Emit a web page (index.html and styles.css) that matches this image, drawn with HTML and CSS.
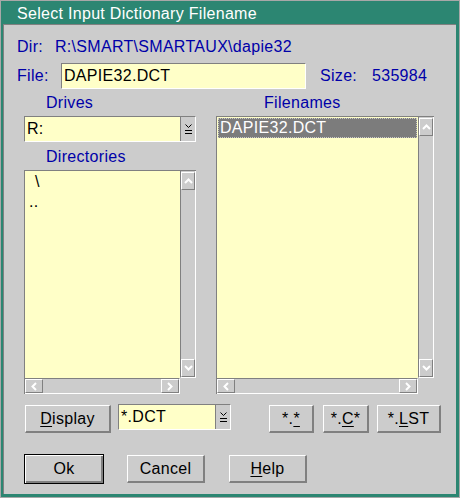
FILE: index.html
```html
<!DOCTYPE html>
<html>
<head>
<meta charset="utf-8">
<link rel="stylesheet" href="styles.css">
</head>
<body>
<div class="window">
  <div class="titlebar">Select Input Dictionary Filename</div>
  <div class="client">
    <div class="row dir-row">
      <span class="lbl dir-lbl">Dir:</span>
      <span class="lbl">R:\SMART\SMARTAUX\dapie32</span>
    </div>
    <div class="row file-row">
      <span class="lbl file-lbl">File:</span>
      <div class="entry">DAPIE32.DCT</div>
      <span class="lbl size-lbl">Size:</span>
      <span class="lbl">535984</span>
    </div>
    <div class="columns">
      <div class="col col-left">
        <div class="group-label">Drives</div>
        <div class="combo drives">
          <div class="combo-text">R:</div>
          <div class="combo-btn"><svg width="7" height="10" viewBox="0 0 7 10"><polyline points="0.5,0.5 3.5,3.5 6.5,0.5" fill="none" stroke="#000" stroke-width="1"/><line x1="0" y1="6.5" x2="7" y2="6.5" stroke="#000"/><line x1="0" y1="9.5" x2="7" y2="9.5" stroke="#000"/></svg></div>
        </div>
        <div class="group-label dirs-label">Directories</div>
        <div class="listbox dirs">
          <div class="list-area">
            <div class="item"><span class="indent">\</span></div>
            <div class="item">..</div>
          </div>
          <div class="vscroll">
            <div class="sbtn vbtn"><svg width="9" height="6" viewBox="0 0 9 6"><polyline points="1,5 4.5,1.5 8,5" fill="none" stroke="#fff" stroke-width="2"/></svg></div>
            <div class="sbtn vbtn"><svg width="9" height="6" viewBox="0 0 9 6"><polyline points="1,1 4.5,4.5 8,1" fill="none" stroke="#fff" stroke-width="2"/></svg></div>
          </div>
          <div class="hscroll">
            <div class="sbtn hbtn"><svg width="6" height="9" viewBox="0 0 6 9"><polyline points="5,1 1.5,4.5 5,8" fill="none" stroke="#fff" stroke-width="2"/></svg></div>
            <div class="sbtn hbtn"><svg width="6" height="9" viewBox="0 0 6 9"><polyline points="1,1 4.5,4.5 1,8" fill="none" stroke="#fff" stroke-width="2"/></svg></div>
          </div>
          <div class="corner"></div>
        </div>
      </div>
      <div class="col col-right">
        <div class="group-label files-label">Filenames</div>
        <div class="listbox files">
          <div class="list-area">
            <div class="item selected">DAPIE32.DCT</div>
          </div>
          <div class="vscroll">
            <div class="sbtn vbtn"><svg width="9" height="6" viewBox="0 0 9 6"><polyline points="1,5 4.5,1.5 8,5" fill="none" stroke="#fff" stroke-width="2"/></svg></div>
            <div class="sbtn vbtn"><svg width="9" height="6" viewBox="0 0 9 6"><polyline points="1,1 4.5,4.5 8,1" fill="none" stroke="#fff" stroke-width="2"/></svg></div>
          </div>
          <div class="hscroll">
            <div class="sbtn hbtn"><svg width="6" height="9" viewBox="0 0 6 9"><polyline points="5,1 1.5,4.5 5,8" fill="none" stroke="#fff" stroke-width="2"/></svg></div>
            <div class="sbtn hbtn"><svg width="6" height="9" viewBox="0 0 6 9"><polyline points="1,1 4.5,4.5 1,8" fill="none" stroke="#fff" stroke-width="2"/></svg></div>
          </div>
          <div class="corner"></div>
        </div>
      </div>
    </div>
    <div class="row tools">
      <div class="btn btn-display"><u>D</u>isplay</div>
      <div class="combo filter">
        <div class="combo-text">*.DCT</div>
        <div class="combo-btn"><svg width="7" height="10" viewBox="0 0 7 10"><polyline points="0.5,0.5 3.5,3.5 6.5,0.5" fill="none" stroke="#000" stroke-width="1"/><line x1="0" y1="6.5" x2="7" y2="6.5" stroke="#000"/><line x1="0" y1="9.5" x2="7" y2="9.5" stroke="#000"/></svg></div>
      </div>
      <div class="btn btn-all">*.<u>*</u></div>
      <div class="btn btn-c">*.<u>C</u>*</div>
      <div class="btn btn-lst">*.<u>L</u>ST</div>
    </div>
    <div class="row actions">
      <div class="btn btn-ok">Ok</div>
      <div class="btn btn-cancel">Cancel</div>
      <div class="btn btn-help"><u>H</u>elp</div>
    </div>
  </div>
</div>
</body>
</html>
```

FILE: styles.css
```css
* { box-sizing: border-box; }
html, body { margin: 0; padding: 0; }
body {
  width: 460px;
  height: 498px;
  font-family: "Liberation Sans", Arial, sans-serif;
  font-size: 16px;
  letter-spacing: 0.3px;
  background: #2c8a78;
}
.window {
  width: 460px;
  height: 498px;
  border: 1px solid #a8a8a8;
  background: #2c8672;
  padding: 0 3px 3px 2px;
  display: flex;
  flex-direction: column;
}
.titlebar {
  height: 23px;
  padding: 3px 0 0 14px;
  line-height: 20px;
  color: #ffffff;
  white-space: nowrap;
}
.client {
  flex: 1;
  background: #cccccc;
  border-top: 1px solid #808080;
  border-left: 1px solid #808080;
  display: flex;
  flex-direction: column;
}
.row { display: flex; }
.lbl { color: #0000a8; white-space: nowrap; }
.dir-row {
  margin-top: 13px;
  padding-left: 13px;
  line-height: 18px;
  height: 18px;
}
.dir-lbl { width: 38px; }
.file-row {
  margin-top: 7px;
  padding-left: 13px;
  height: 26px;
  align-items: center;
}
.file-lbl { width: 44px; }
.entry {
  width: 245px;
  height: 26px;
  background: #ffffc8;
  border-style: solid;
  border-width: 1px;
  border-color: #808080 #ffffff #ffffff #808080;
  padding-left: 2px;
  line-height: 23px;
  color: #000;
}
.size-lbl { margin-left: 14px; width: 52px; }
.columns {
  display: flex;
  margin-top: 5px;
  margin-left: 20px;
  gap: 20px;
}
.col { display: flex; flex-direction: column; }
.col-left { width: 172px; }
.col-right { width: 218px; }
.group-label {
  height: 18px;
  line-height: 18px;
  color: #0000a8;
  padding-left: 22px;
}
.files-label { padding-left: 48px; }
.dirs-label { margin-top: 6px; }
.combo {
  height: 26px;
  display: flex;
  border-style: solid;
  border-width: 1px;
  border-color: #808080 #ffffff #ffffff #808080;
}
.drives { margin-top: 4px; }
.combo-text {
  flex: 1;
  background: #ffffc8;
  padding-left: 2px;
  line-height: 23px;
  color: #000;
}
.combo-btn {
  width: 15px;
  background: #cccccc;
  border-left: 1px solid #808080;
  display: flex;
  align-items: center;
  justify-content: center;
}
.listbox {
  margin-top: 4px;
  display: grid;
  grid-template-columns: 1fr 16px;
  grid-template-rows: 1fr 16px;
  border-top: 1px solid #808080;
  border-left: 1px solid #808080;
}
.dirs { height: 224px; }
.files { height: 278px; }
.list-area {
  background: #ffffc8;
  padding-top: 1px;
  overflow: hidden;
}
.item {
  height: 20px;
  line-height: 20px;
  color: #000;
  padding-left: 4px;
  white-space: nowrap;
}
.indent { padding-left: 6px; }
.item.selected {
  margin: 0 1px;
  background: #7c7c7c;
  color: #ffffff;
  outline: 1px dotted #c8c8c8;
  outline-offset: -1px;
  padding-left: 2px;
}
.vscroll {
  background: #cccccc;
  border-left: 1px solid #808080;
  border-right: 1px solid #ffffff;
  border-bottom: 1px solid #ffffff;
  display: flex;
  flex-direction: column;
  justify-content: space-between;
  padding-top: 1px;
}
.hscroll {
  background: #cccccc;
  border-top: 1px solid #808080;
  border-right: 1px solid #ffffff;
  border-bottom: 1px solid #ffffff;
  display: flex;
  justify-content: space-between;
}
.sbtn {
  background: #cccccc;
  border-style: solid;
  border-width: 1px;
  border-color: #ffffff #808080 #808080 #ffffff;
  display: flex;
  align-items: center;
  justify-content: center;
}
.vbtn { width: 14px; height: 18px; }
.hbtn { width: 18px; height: 14px; }
.corner { background: #cccccc; }
.tools {
  margin-top: 10px;
  align-items: flex-start;
}
.btn {
  height: 28px;
  margin-top: 1px;
  background: #cccccc;
  border-style: solid;
  border-width: 1px 2px 2px 1px;
  border-color: #ffffff #808080 #808080 #ffffff;
  color: #000;
  display: flex;
  align-items: center;
  justify-content: center;
  white-space: nowrap;
}
.btn u { text-decoration: underline; text-underline-offset: 2px; }
.btn-display { margin-left: 21px; width: 86px; }
.filter { margin-left: 7px; width: 113px; }
.btn-all { margin-left: 38px; width: 45px; }
.btn-c { margin-left: 9px; width: 46px; }
.btn-lst { margin-left: 8px; width: 64px; }
.actions {
  margin-top: 21px;
  align-items: flex-start;
}
.btn-ok {
  margin-top: 0;
  margin-left: 20px;
  width: 80px;
  height: 30px;
  border: 1px solid #000;
  box-shadow: inset 1px 1px #ffffff, inset -2px -2px #808080;
}
.btn-cancel { margin-left: 23px; width: 78px; }
.btn-help { margin-left: 24px; width: 78px; }
```
